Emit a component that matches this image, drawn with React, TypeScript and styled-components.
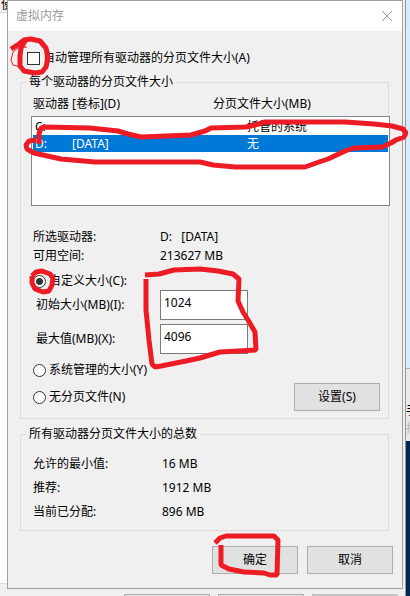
import React, { useState } from "react";
import styled, { createGlobalStyle } from "styled-components";

const GlobalStyle = createGlobalStyle`
  * { box-sizing: border-box; }
  body {
    margin: 0;
    background: #f0f0f0;
    color: #000;
    font: 12px/18px "Noto Sans", "Noto Sans CJK SC", sans-serif;
  }
  button, input { font: inherit; color: inherit; }
`;

const Desktop = styled.div`
  position: relative;
  display: grid;
  grid-template-columns: 7px 1fr 7px;
  min-height: 100vh;
  overflow: hidden;
`;

const LeftWindow = styled.div`
  display: flex;
  flex-direction: column;
  background: #fff;
  overflow: hidden;
`;

const LeftTab = styled.div`
  height: 13px;
  padding-left: 1px;
  line-height: 9px;
  background: #f0f0f0;
  border-bottom: 1px solid #d9d9d9;
  white-space: nowrap;
  overflow: hidden;
`;

const LeftFooter = styled.div`
  height: 13px;
  margin-top: auto;
  background: #f0f0f0;
  border-top: 1px solid #dcdcdc;
`;

const Center = styled.div`
  display: flex;
  flex-direction: column;
  min-width: 0;
`;

const ParentFooter = styled.div`
  display: flex;
  flex: 1 0 7px;
  height: 7px;
  justify-content: flex-end;
  gap: 8px;
  padding: 5px 5px 0 0;
  overflow: hidden;
`;

const ParentButton = styled.div<{ $disabled?: boolean }>`
  width: 86px;
  background: ${(p) => (p.$disabled ? "#cccccc" : "#e1e1e1")};
  border: 1px solid ${(p) => (p.$disabled ? "#bfbfbf" : "#adadad")};
  border-bottom: 0;
`;

const RightWindow = styled.div`
  display: flex;
  flex-direction: column;
  margin-left: 2px;
  border-left: 1px solid #8f979e;
  background: #d9ebff;
  overflow: hidden;
`;

const RightSky = styled.div`
  height: 368px;
`;

const RightPanel = styled.div`
  height: 73px;
  padding-top: 33px;
  background: #e9e9e9;
  border-top: 1px solid #b0b0b0;
  white-space: nowrap;
`;

const RightText = styled.div<{ $faint?: boolean }>`
  color: ${(p) => (p.$faint ? "#b5b5b5" : "#000")};
`;

const RightDesktop = styled.div`
  flex: 1;
  background: #00274f;
`;

const Dialog = styled.form`
  background: #f0f0f0;
  border: 1px solid #a0a0a0;
`;

const TitleBar = styled.header`
  display: flex;
  align-items: center;
  justify-content: space-between;
  height: 30px;
  padding: 0 9px 0 8px;
  background: #fff;
  color: #999;
`;

const Title = styled.h1`
  margin: 0;
  font-size: 12px;
  font-weight: 400;
`;

const CloseButton = styled.button`
  display: flex;
  padding: 0;
  border: 0;
  background: none;
  color: #999;
`;

const Body = styled.div`
  padding: 15px 0 14px;
`;

const Choice = styled.label<{ $gap: number }>`
  display: flex;
  align-items: center;
  gap: ${(p) => p.$gap}px;
`;

const AutoRow = styled.div`
  display: flex;
  height: 24px;
  padding-left: 19px;
`;

const CheckBox = styled.input`
  appearance: none;
  width: 13px;
  height: 13px;
  margin: 0;
  border: 1px solid #333;
  background: #fff;
  &:checked { box-shadow: inset 0 0 0 2px #fff; background: #333; }
`;

const Radio = styled.input`
  appearance: none;
  width: 13px;
  height: 13px;
  margin: 0;
  border: 1px solid #333;
  border-radius: 50%;
  background: #fff;
  &:checked { background: radial-gradient(circle, #333 3px, #fff 4px); }
`;

const Group = styled.fieldset<{ $top: number; $bottom: number }>`
  min-width: 0;
  margin: ${(p) => p.$top}px 13px 0 12px;
  padding: 0 5px ${(p) => p.$bottom}px;
  border: 1px solid #dcdcdc;
`;

const Legend = styled.legend`
  height: 18px;
  padding: 0 3px;
`;

const DriveTable = styled.table`
  display: block;
  padding-top: 4px;
  margin: 0 -7px 0 5px;
  thead, tbody { display: block; }
  th, td { padding: 0; font-weight: 400; text-align: left; white-space: nowrap; }
`;

const HeadRow = styled.tr`
  display: grid;
  grid-template-columns: 180px 1fr;
  height: 18px;
  margin: 0 0 3px 2px;
`;

const DriveList = styled.tbody`
  height: 90px;
  padding: 1px;
  background: #fff;
  border: 1px solid #828790;
`;

const DriveRow = styled.tr<{ $selected?: boolean }>`
  display: grid;
  grid-template-columns: 37px 175px 1fr;
  height: 17px;
  padding-left: 2px;
  line-height: 17px;
  color: ${(p) => (p.$selected ? "#fff" : "#000")};
  background: ${(p) => (p.$selected ? "#0078d7" : "transparent")};
`;

const Facts = styled.dl<{ $top: number; $row: number; $label: number }>`
  display: grid;
  grid-template-columns: ${(p) => p.$label}px 1fr;
  grid-auto-rows: ${(p) => p.$row}px;
  align-items: center;
  margin: ${(p) => p.$top}px 0 0 7px;
  dt, dd { margin: 0; white-space: pre; }
`;

const ChoiceRow = styled.div<{ $top: number }>`
  display: flex;
  align-items: center;
  justify-content: space-between;
  min-height: 18px;
  margin: ${(p) => p.$top}px 3px 0 7px;
`;

const Sizes = styled.div`
  display: grid;
  grid-template-columns: 124px 88px;
  gap: 4px 0;
  align-items: center;
  margin-left: 10px;
`;

const SizeInput = styled.input`
  width: 88px;
  height: 30px;
  padding: 0 3px 6px;
  border: 1px solid #7a7a7a;
  background: #fff;
  outline: 0;
`;

const PushButton = styled.button`
  width: 86px;
  height: 28px;
  padding: 0;
  background: #e1e1e1;
  border: 1px solid #adadad;
`;

const Actions = styled.footer`
  display: flex;
  justify-content: flex-end;
  gap: 9px;
  padding: 15px 9px 0;
`;

const Ink = styled.svg`
  position: absolute;
  top: 0;
  left: 0;
  pointer-events: none;
`;

const strokes = [
  "M11 49 L19 44 L24 40 L31 39 L40 41 L46 48 L48 58 L46 67 L42 72 L35 73 L24 71 L20 66 L20 56 L21 48 L25 41",
  "M39 144 L39 134 L41 128 L44 127 L90 128 L118 131 L128 134 L141 137 L191 135 L205 131 L211 128 L246 127 L255 125 L265 122 L345 122 L374 124 L392 126 L403 129 L406 133 L404 137 L396 140 L391 143 L382 147 L354 148 L345 151 L328 159 L319 162 L305 167 L235 167 L213 165 L200 162 L95 162 L61 159 L34 153 L27 149 L26 145 L29 141 L36 140",
  "M32 276 L36 272 L42 271 L50 274 L53 278 L52 285 L49 291 L43 292 L35 289 L32 283 L32 276",
  "M145 275 L159 274 L174 270 L200 269 L218 271 L233 274 L239 279 L238 301 L243 312 L248 320 L255 332 L256 350 L220 352 L200 358 L186 361 L161 366 L155 367 L152 364 L149 340 L146 310 L146 279",
  "M215 543 L220 538 L226 536 L274 536 L278 540 L277 575 L270 575 L264 573 L244 572 L229 569 L221 565 L221 545",
];

const drives = [
  { letter: "C:", label: "", size: "托管的系统" },
  { letter: "D:", label: "[DATA]", size: "无" },
];

export default function App() {
  const [auto, setAuto] = useState(false);
  const [mode, setMode] = useState("custom");
  const [selected, setSelected] = useState("D:");
  const [initial, setInitial] = useState("1024");
  const [maximum, setMaximum] = useState("4096");

  const radio = (value: string, text: string) => (
    <Choice $gap={3}>
      <Radio
        type="radio"
        name="mode"
        checked={mode === value}
        onChange={() => setMode(value)}
      />
      {text}
    </Choice>
  );

  return (
    <>
      <GlobalStyle />
      <Desktop>
        <LeftWindow>
          <LeftTab>使</LeftTab>
          <LeftFooter />
        </LeftWindow>
        <Center>
          <Dialog onSubmit={(e) => e.preventDefault()}>
            <TitleBar>
              <Title>虚拟内存</Title>
              <CloseButton type="button" aria-label="关闭">
                <svg width="12" height="12" viewBox="0 0 12 12" fill="none" stroke="currentColor">
                  <path d="M1 1 L11 11 M11 1 L1 11" />
                </svg>
              </CloseButton>
            </TitleBar>
            <Body>
              <AutoRow>
                <Choice $gap={3}>
                  <CheckBox
                    type="checkbox"
                    checked={auto}
                    onChange={(e) => setAuto(e.target.checked)}
                  />
                  自动管理所有驱动器的分页文件大小(A)
                </Choice>
              </AutoRow>
              <Group $top={3} $bottom={7}>
                <Legend>每个驱动器的分页文件大小</Legend>
                <DriveTable>
                  <thead>
                    <HeadRow>
                      <th>驱动器 [卷标](D)</th>
                      <th>分页文件大小(MB)</th>
                    </HeadRow>
                  </thead>
                  <DriveList>
                    {drives.map((d) => (
                      <DriveRow
                        key={d.letter}
                        $selected={selected === d.letter}
                        onClick={() => setSelected(d.letter)}
                      >
                        <td>{d.letter}</td>
                        <td>{d.label}</td>
                        <td>{d.size}</td>
                      </DriveRow>
                    ))}
                  </DriveList>
                </DriveTable>
                <Facts $top={21} $row={19} $label={127}>
                  <dt>所选驱动器:</dt>
                  <dd>{"D:   [DATA]"}</dd>
                  <dt>可用空间:</dt>
                  <dd>213627 MB</dd>
                </Facts>
                <ChoiceRow $top={7}>{radio("custom", "自定义大小(C):")}</ChoiceRow>
                <Sizes>
                  <label htmlFor="initial">初始大小(MB)(I):</label>
                  <SizeInput
                    id="initial"
                    value={initial}
                    onChange={(e) => setInitial(e.target.value)}
                  />
                  <label htmlFor="maximum">最大值(MB)(X):</label>
                  <SizeInput
                    id="maximum"
                    value={maximum}
                    onChange={(e) => setMaximum(e.target.value)}
                  />
                </Sizes>
                <ChoiceRow $top={7}>{radio("system", "系统管理的大小(Y)")}</ChoiceRow>
                <ChoiceRow $top={4}>
                  {radio("none", "无分页文件(N)")}
                  <PushButton type="button">设置(S)</PushButton>
                </ChoiceRow>
              </Group>
              <Group $top={6} $bottom={6}>
                <Legend>所有驱动器分页文件大小的总数</Legend>
                <Facts $top={9} $row={24} $label={129}>
                  <dt>允许的最小值:</dt>
                  <dd>16 MB</dd>
                  <dt>推荐:</dt>
                  <dd>1912 MB</dd>
                  <dt>当前已分配:</dt>
                  <dd>896 MB</dd>
                </Facts>
              </Group>
              <Actions>
                <PushButton type="submit">确定</PushButton>
                <PushButton type="button">取消</PushButton>
              </Actions>
            </Body>
          </Dialog>
          <ParentFooter>
            <ParentButton />
            <ParentButton />
            <ParentButton $disabled />
          </ParentFooter>
        </Center>
        <RightWindow>
          <RightSky />
          <RightPanel>
            <RightText>手</RightText>
            <RightText $faint>控</RightText>
          </RightPanel>
          <RightDesktop />
        </RightWindow>
        <Ink width="410" height="596" viewBox="0 0 410 596" fill="none" stroke="#ed1c24" aria-hidden="true">
          {strokes.map((d) => (
            <path key={d} d={d} strokeWidth="5" strokeLinejoin="bevel" />
          ))}
          <path d="M27 47 L18 48 L13 52 L11 60 L13 65 L20 67" />
        </Ink>
      </Desktop>
    </>
  );
}
